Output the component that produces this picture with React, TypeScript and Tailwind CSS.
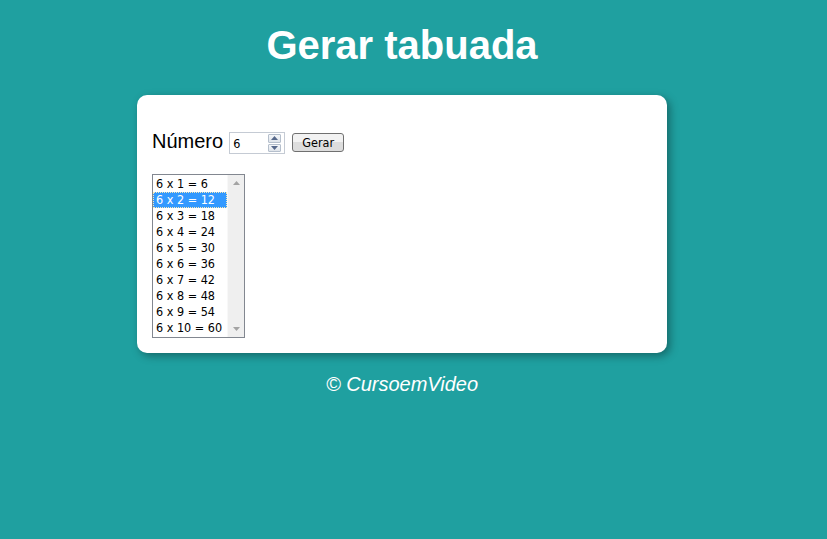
import React from "react";

const rows = Array.from({ length: 10 }, (_, i) => `6 x ${i + 1} = ${6 * (i + 1)}`);
const uiFont = '"DejaVu Sans Condensed", "DejaVu Sans", Tahoma, sans-serif';

export default function App() {
  return (
    <div className="min-h-[539px] w-full bg-[#1fa0a0]" style={{ fontFamily: '"Liberation Sans", Arial, sans-serif' }}>
      <div className="w-[804px] flex flex-col items-center">
        <h1 className="mt-[23px] text-[40px] leading-[45px] font-bold text-white">Gerar tabuada</h1>
        <div className="mt-[27px] w-[530px] h-[258px] bg-white rounded-[10px] shadow-[3px_3px_8px_rgba(0,0,0,0.35)] px-[15px] pt-[33px]">
          <div className="flex items-start">
            <span className="text-[20px] leading-[26px] text-black">Número</span>
            <div className="ml-[6px] mt-[4px] w-[56px] h-[22px] border border-[#c5cbd4] bg-white flex items-center justify-between pl-[3px] pr-[3px]">
              <span className="text-[12.5px] leading-[16px] text-black pt-[1px]" style={{ fontFamily: uiFont }}>6</span>
              <div className="flex flex-col w-[13px] h-[18px] gap-[1px]">
                <div className="flex-1 border border-[#b5bfcc] rounded-[1px] bg-gradient-to-b from-[#f4f6f9] to-[#dfe4ea] flex items-center justify-center">
                  <svg width="7" height="4" viewBox="0 0 7 4"><path d="M3.5 0 L7 4 L0 4 Z" fill="#56688a" /></svg>
                </div>
                <div className="flex-1 border border-[#b5bfcc] rounded-[1px] bg-gradient-to-b from-[#f4f6f9] to-[#dfe4ea] flex items-center justify-center">
                  <svg width="7" height="4" viewBox="0 0 7 4"><path d="M0 0 L7 0 L3.5 4 Z" fill="#56688a" /></svg>
                </div>
              </div>
            </div>
            <button
              className="ml-[7px] mt-[5px] w-[52px] h-[19px] border border-[#707070] rounded-[3px] bg-gradient-to-b from-[#f2f2f2] from-50% to-[#dddddd] to-50% text-[12.5px] leading-[17px] text-black"
              style={{ fontFamily: uiFont }}
            >
              Gerar
            </button>
          </div>
          <div className="mt-[20px] w-[93px] h-[164px] border border-[#828790] bg-white flex">
            <div className="flex-1 pt-[1px]" style={{ fontFamily: uiFont }}>
              {rows.map((r, i) => (
                <div
                  key={r}
                  className={
                    i === 1
                      ? "h-[16px] leading-[16px] text-[12.5px] pl-[3px] bg-[#3399ff] text-white outline-1 outline-dotted outline-[#f7e9b8] -outline-offset-1 whitespace-nowrap"
                      : "h-[16px] leading-[16px] text-[12.5px] pl-[3px] text-black whitespace-nowrap"
                  }
                >
                  {r}
                </div>
              ))}
            </div>
            <div className="w-[17px] bg-[#efefef] border-l border-[#f8f8f8] flex flex-col justify-between items-center py-[6px]">
              <svg width="7" height="4" viewBox="0 0 7 4"><path d="M3.5 0 L7 4 L0 4 Z" fill="#a3a3a3" /></svg>
              <svg width="7" height="4" viewBox="0 0 7 4"><path d="M0 0 L7 0 L3.5 4 Z" fill="#a3a3a3" /></svg>
            </div>
          </div>
        </div>
        <p className="mt-[20px] text-[20px] leading-[23px] italic text-white">© CursoemVideo</p>
      </div>
    </div>
  );
}
